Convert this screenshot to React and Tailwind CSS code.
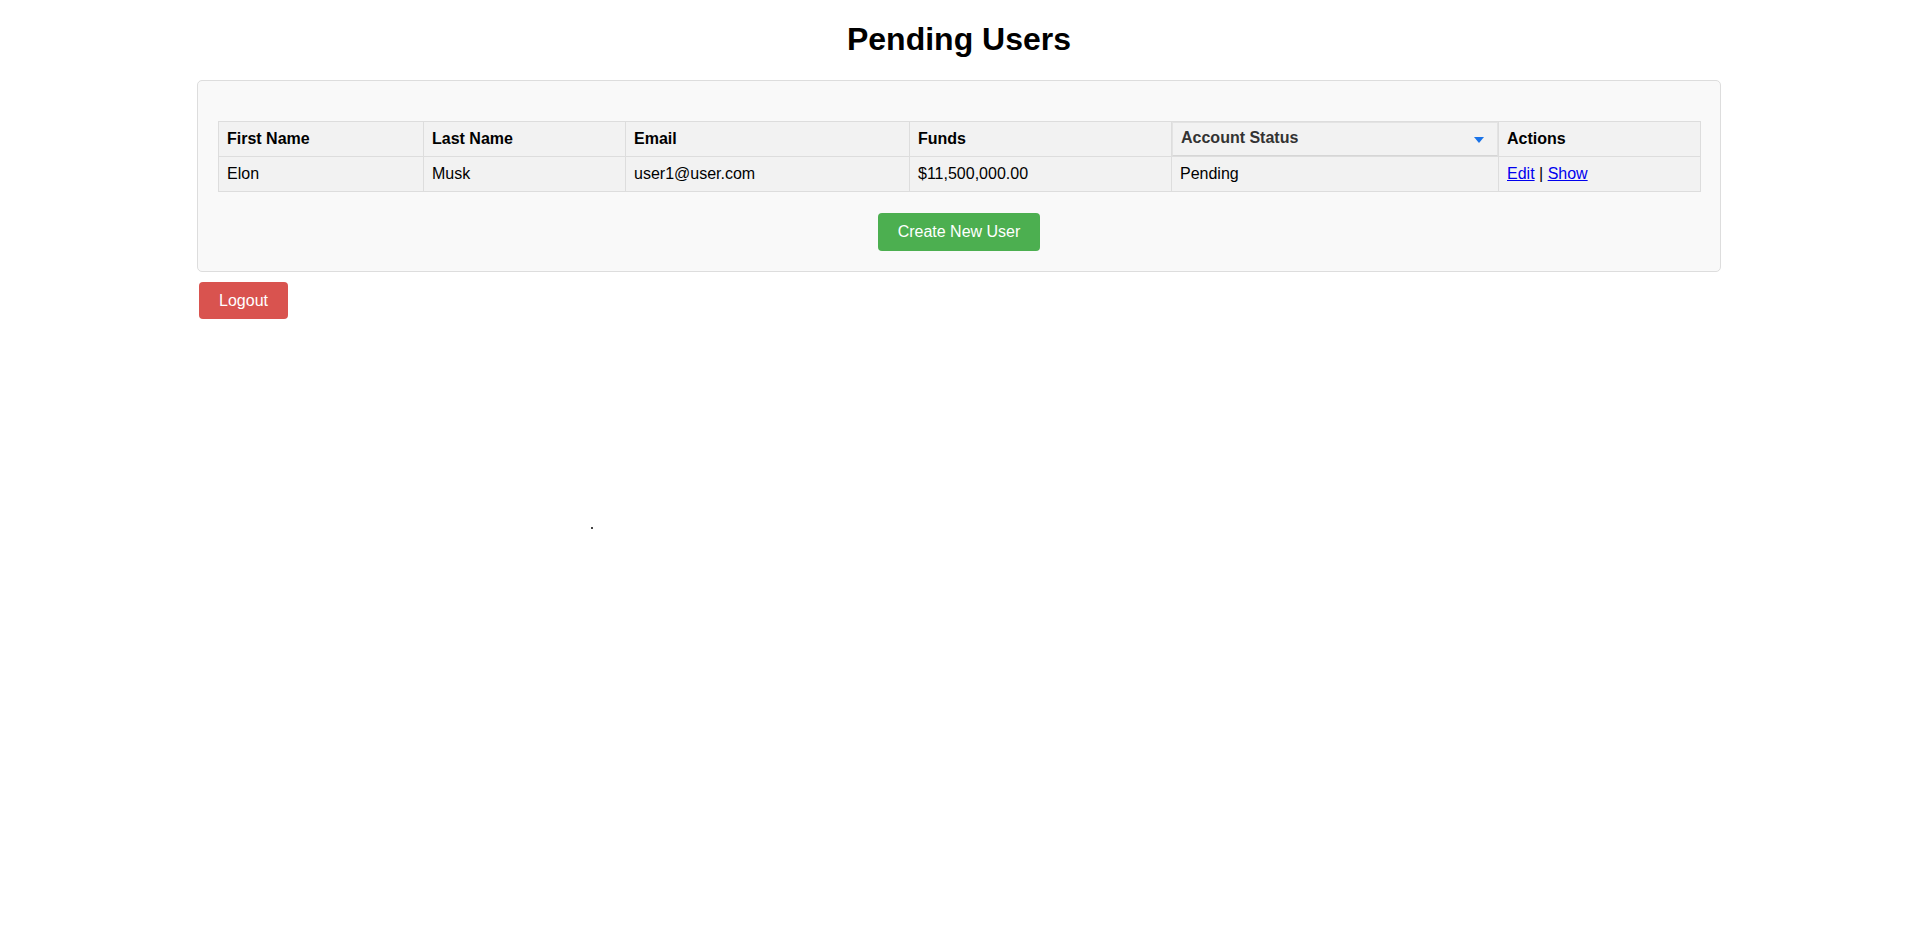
import React from 'react';

const users = [
  {
    firstName: 'Elon',
    lastName: 'Musk',
    email: 'user1@user.com',
    funds: '$11,500,000.00',
    status: 'Pending',
  },
];

function StatusSelect() {
  return (
    <div className="flex h-[34px] items-center justify-between border border-[#e3e3e3] border-b-[#d6d6d6] pl-[8px] pr-[13px] pb-[3px] text-[#333] shadow-[0_1px_0_#e2e2e2]">
      <span>Account Status</span>
      <svg width="10" height="6" viewBox="0 0 10 6" className="mt-[5px]">
        <polygon points="0,0 10,0 5,6" fill="#1a73e8" />
      </svg>
    </div>
  );
}

export default function App() {
  return (
    <div className="relative min-h-screen bg-white font-['Liberation_Sans',Arial,sans-serif] text-[16px] text-black">
      <h1 className="pt-[21px] mb-[22px] text-center text-[32px] font-bold leading-[37px]">
        Pending Users
      </h1>

      <div className="mx-auto w-[1524px]">
        <div className="rounded-[5px] border border-[#dddddd] bg-[#f9f9f9] px-[20px] pt-[40px] pb-[20px]">
          <table className="w-full table-fixed border-collapse">
            <colgroup>
              <col className="w-[205px]" />
              <col className="w-[202px]" />
              <col className="w-[284px]" />
              <col className="w-[262px]" />
              <col className="w-[327px]" />
              <col className="w-[202px]" />
            </colgroup>
            <thead>
              <tr className="bg-[#f2f2f2]">
                <th className="h-[35px] border border-[#dddddd] px-[8px] text-left font-bold leading-[18px]">First Name</th>
                <th className="border border-[#dddddd] px-[8px] text-left font-bold leading-[18px]">Last Name</th>
                <th className="border border-[#dddddd] px-[8px] text-left font-bold leading-[18px]">Email</th>
                <th className="border border-[#dddddd] px-[8px] text-left font-bold leading-[18px]">Funds</th>
                <th className="border border-[#dddddd] p-0 text-left font-bold leading-[18px]">
                  <StatusSelect />
                </th>
                <th className="border border-[#dddddd] px-[8px] text-left font-bold leading-[18px]">Actions</th>
              </tr>
            </thead>
            <tbody>
              {users.map((u) => (
                <tr key={u.email} className="bg-[#f2f2f2]">
                  <td className="h-[35px] border border-[#dddddd] px-[8px] leading-[18px]">{u.firstName}</td>
                  <td className="border border-[#dddddd] px-[8px] leading-[18px]">{u.lastName}</td>
                  <td className="border border-[#dddddd] px-[8px] leading-[18px]">{u.email}</td>
                  <td className="border border-[#dddddd] px-[8px] leading-[18px]">{u.funds}</td>
                  <td className="border border-[#dddddd] px-[8px] leading-[18px]">{u.status}</td>
                  <td className="border border-[#dddddd] px-[8px] leading-[18px]">
                    <a href="#" className="text-[#0000ee] underline">Edit</a>
                    {' | '}
                    <a href="#" className="text-[#0000ee] underline">Show</a>
                  </td>
                </tr>
              ))}
            </tbody>
          </table>

          <div className="mt-[21px] flex justify-center">
            <button
              type="button"
              className="h-[38px] rounded-[4px] bg-[#4caf50] px-[20px] leading-[18px] text-white"
            >
              Create New User
            </button>
          </div>
        </div>

        <button
          type="button"
          className="mt-[10px] ml-[2px] h-[37px] w-[89px] rounded-[4px] bg-[#d9534f] leading-[18px] text-white"
        >
          Logout
        </button>
      </div>

      <div className="absolute left-[591px] top-[527px] h-[2px] w-[2px] bg-[#444]" />
    </div>
  );
}
